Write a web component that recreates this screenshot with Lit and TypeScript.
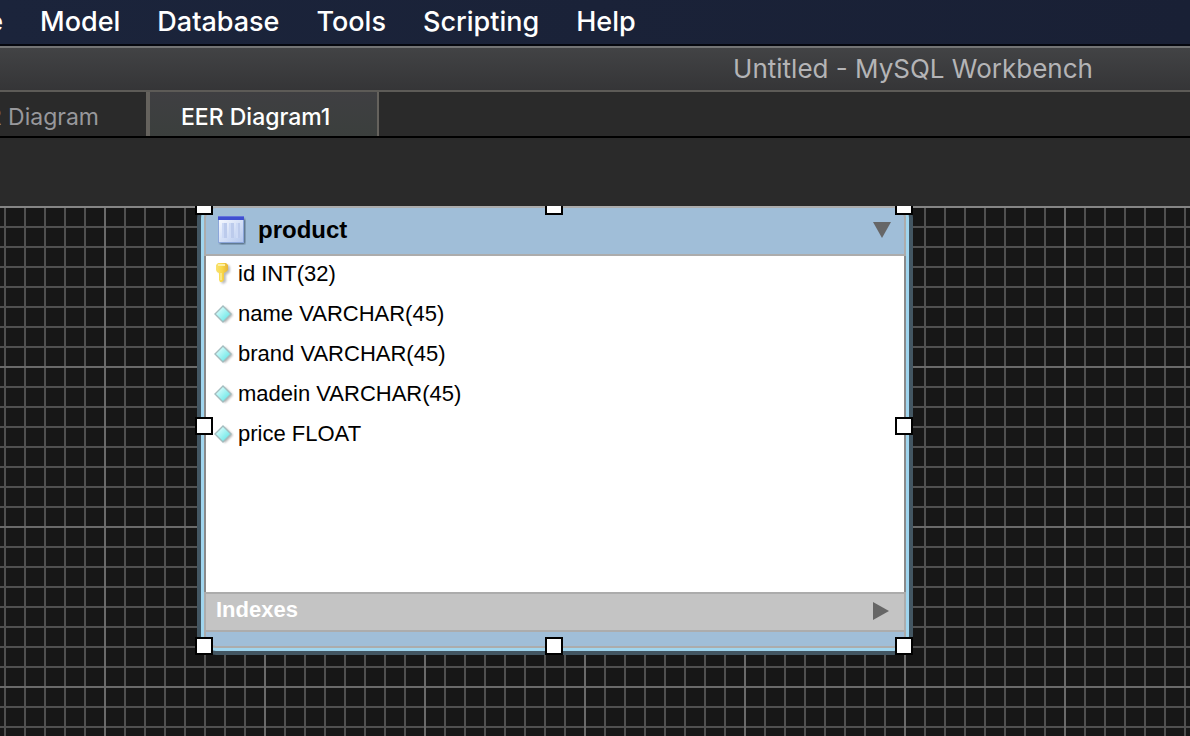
import { LitElement, html, css } from "lit";
import { customElement, property } from "lit/decorators.js";

interface Column {
  name: string;
  type: string;
  primary?: boolean;
}

const MENUS = ["Model", "Database", "Tools", "Scripting", "Help"];

const COLUMNS: Column[] = [
  { name: "id", type: "INT(32)", primary: true },
  { name: "name", type: "VARCHAR(45)" },
  { name: "brand", type: "VARCHAR(45)" },
  { name: "madein", type: "VARCHAR(45)" },
  { name: "price", type: "FLOAT" },
];

const HANDLES = ["nw", "n", "ne", "w", "e", "sw", "s", "se"];

const keyIcon = html`<svg width="20" height="24" viewBox="0 0 20 24" aria-hidden="true">
  <defs>
    <linearGradient id="gold" x1="0" x2="1" y1="0" y2="0">
      <stop offset="0" stop-color="#f8e270" />
      <stop offset="0.5" stop-color="#f9d848" />
      <stop offset="1" stop-color="#e6b43a" />
    </linearGradient>
    <filter id="soft" x="-30%" y="-30%" width="160%" height="160%">
      <feGaussianBlur stdDeviation="0.9" />
    </filter>
  </defs>
  <path d="M6 3h8l2 2v5l-4 3v7l-3 2-2-2v-8l-3-3V5z" fill="#777" opacity="0.5" filter="url(#soft)" />
  <path d="M4 1h8l2 2v5l-2 2-2 1v7l-2 2H6l-1-2v-7l-2-1-1-2V3z" fill="url(#gold)" />
  <path d="M4 2h7v2H4z" fill="#fdf0a4" />
  <path d="M6 11h2v7H6z" fill="#fbe883" />
</svg>`;

const columnIcon = html`<svg width="20" height="24" viewBox="0 0 20 24" aria-hidden="true">
  <defs>
    <linearGradient id="gem" x1="0" x2="1" y1="0" y2="1">
      <stop offset="0.2" stop-color="#d4fcfb" />
      <stop offset="0.75" stop-color="#78eaea" />
    </linearGradient>
    <filter id="soft" x="-30%" y="-30%" width="160%" height="160%">
      <feGaussianBlur stdDeviation="0.9" />
    </filter>
  </defs>
  <path d="M11 5l8 8-8 8-8-8z" fill="#777" opacity="0.55" filter="url(#soft)" />
  <path d="M9 4l8 8-8 8-8-8z" fill="url(#gem)" stroke="#a3bcbe" stroke-width="1.4" />
</svg>`;

const tableIcon = html`<svg width="30" height="30" viewBox="0 0 30 30" aria-hidden="true">
  <defs>
    <linearGradient id="sheet" x1="0" x2="1" y1="0" y2="1">
      <stop offset="0" stop-color="#f6f9ff" />
      <stop offset="1" stop-color="#b4c8ee" />
    </linearGradient>
    <filter id="soft" x="-20%" y="-20%" width="140%" height="140%">
      <feGaussianBlur stdDeviation="0.9" />
    </filter>
  </defs>
  <path d="M4 4h25v25H4z" fill="#2c4052" opacity="0.8" filter="url(#soft)" />
  <path d="M2 1h26v27H2z" fill="#8ba6da" />
  <path d="M3 5h24v22H3z" fill="url(#sheet)" />
  <path d="M2 1h26v4H2z" fill="#3f4fd0" />
  <path d="M2 1h26v1H2z" fill="#6473dc" />
  <path d="M6 8h5v15H6zM13 8h5v15h-5zM20 8h4v15h-4z" fill="#bccbec" />
  <path d="M6 8h2v15H6zM13 8h2v15h-2zM20 8h2v15h-2z" fill="#cddaf5" />
</svg>`;

@customElement("menu-bar")
class MenuBar extends LitElement {
  static styles = css`
    :host {
      display: block;
      background: linear-gradient(90deg, #1b243b, #192035);
      border-bottom: 2px solid #05070e;
    }
    .menus {
      display: flex;
      align-items: center;
      height: 44px;
      gap: 37px;
    }
    .clipped {
      display: flex;
      justify-content: flex-end;
      width: 3px;
      overflow: hidden;
      flex: none;
    }
    .menu {
      flex: none;
      margin: 0;
      padding: 0;
      border: 0;
      background: none;
      color: #fff;
      font: 500 27px/32px Inter, sans-serif;
    }
  `;
  render() {
    return html`<nav class="menus" aria-label="Application menu">
      <span class="clipped"><button class="menu">Arrange</button></span>
      ${MENUS.map((m) => html`<button class="menu">${m}</button>`)}
    </nav>`;
  }
}

@customElement("tab-strip")
class TabStrip extends LitElement {
  static styles = css`
    :host {
      display: block;
      background: #2a2a2a;
      border-bottom: 2px solid #000;
    }
    .tabs {
      display: flex;
      height: 44px;
    }
    .tab {
      display: flex;
      align-items: center;
      flex: none;
      box-sizing: border-box;
      margin: 0;
      border: 0;
      border-right: 2px solid #65625d;
      background: none;
      color: #98989c;
      font: 400 23px/28px Inter, sans-serif;
      padding: 6px 47px 0 31px;
      white-space: nowrap;
    }
    .first {
      justify-content: flex-end;
      width: 148px;
      overflow: hidden;
    }
    .active {
      border-left: 2px solid #65625d;
      background: linear-gradient(#3f3f42, #3b3f3d);
      color: #fff;
      font-weight: 500;
    }
  `;
  render() {
    return html`<div class="tabs" role="tablist">
      <button class="tab first" role="tab" aria-selected="false">EER Diagram</button>
      <button class="tab active" role="tab" aria-selected="true">EER Diagram1</button>
    </div>`;
  }
}

@customElement("table-figure")
class TableFigure extends LitElement {
  @property() name = "";
  @property({ attribute: false }) columns: Column[] = [];

  static styles = css`
    :host {
      display: block;
      font-family: "Liberation Sans", Arial, sans-serif;
      color: #000;
    }
    .figure {
      position: relative;
      box-sizing: border-box;
      border: 2px solid #acacac;
      border-radius: 12px;
      background: #a0bed8;
      box-shadow: 0 0 0 3px #a0d5ee, 0 0 0 7px #435662;
    }
    .header {
      display: flex;
      align-items: center;
      gap: 12px;
      box-sizing: border-box;
      height: 48px;
      padding: 0 13px 2px 10px;
      border-bottom: 2px solid #acacac;
    }
    .title {
      flex: 1;
      margin: 0;
      font-size: 24px;
      line-height: 28px;
      font-weight: 700;
    }
    .toggle {
      display: flex;
      margin: 0;
      padding: 0;
      border: 0;
      background: none;
    }
    .columns {
      display: flex;
      flex-direction: column;
      gap: 4px;
      box-sizing: border-box;
      min-height: 336px;
      margin: 0 -2px;
      padding: 0 8px;
      border: solid #8a8a8a;
      border-width: 0 2px;
      list-style: none;
      background: #fff;
    }
    .column {
      display: flex;
      align-items: center;
      gap: 4px;
      font-size: 22px;
      line-height: 36px;
    }
    .indexes {
      display: flex;
      align-items: center;
      justify-content: space-between;
      box-sizing: border-box;
      height: 40px;
      padding: 0 13px 2px 10px;
      border: solid #acacac;
      border-width: 2px 0;
      background: #c4c4c4;
    }
    .caption {
      margin: 0;
      color: #fff;
      font-size: 22px;
      line-height: 32px;
      padding-bottom: 2px;
    }
    .footer {
      height: 14px;
    }
    .handle {
      position: absolute;
      box-sizing: border-box;
      width: 18px;
      height: 18px;
      border: 2px solid #000;
      background: #fff;
      transform: translate(-50%, -50%);
    }
    .nw, .n, .ne { top: -2px; }
    .w, .e { top: calc(50% - 1px); }
    .sw, .s, .se { top: 100%; }
    .nw, .w, .sw { left: -2px; }
    .n, .s { left: calc(50% - 1px); }
    .ne, .e, .se { left: 100%; }
  `;
  render() {
    return html`<article class="figure">
      <header class="header">
        ${tableIcon}
        <h2 class="title">${this.name}</h2>
        <button class="toggle" aria-label="Collapse table">
          <svg width="18" height="16" viewBox="0 0 18 16"><path d="M0 0h18L9 16z" fill="#666" /></svg>
        </button>
      </header>
      <ul class="columns">
        ${this.columns.map(
          (c) => html`<li class="column">
            ${c.primary ? keyIcon : columnIcon}<span>${c.name} ${c.type}</span>
          </li>`
        )}
      </ul>
      <section class="indexes">
        <h3 class="caption">Indexes</h3>
        <button class="toggle" aria-label="Expand indexes">
          <svg width="18" height="18" viewBox="0 0 18 18"><path d="M0 0l16 9-16 9z" fill="#666" /></svg>
        </button>
      </section>
      <div class="footer"></div>
      ${HANDLES.map((h) => html`<i class="handle ${h}"></i>`)}
    </article>`;
  }
}

@customElement("app-root")
class AppRoot extends LitElement {
  static styles = css`
    :host {
      display: flex;
      flex-direction: column;
      min-height: 100vh;
      background: #2a2a2a;
    }
    .titlebar {
      height: 42px;
      padding-left: 636px;
      border-top: 2px solid #737475;
      border-bottom: 2px solid #5d5b57;
      background: linear-gradient(#424345, #353537);
      text-align: center;
      white-space: nowrap;
    }
    .caption {
      margin: 0;
      color: #b4b4b6;
      font: 400 26px/42px Inter, sans-serif;
    }
    .toolbar {
      height: 68px;
    }
    .canvas {
      position: relative;
      flex: 1;
      overflow: hidden;
      background-color: #171717;
      background-image:
        linear-gradient(#858585 2px, transparent 2px),
        linear-gradient(#6a6a6a 2px, transparent 2px),
        linear-gradient(90deg, #6a6a6a 2px, transparent 2px),
        linear-gradient(#505050 2px, transparent 2px),
        linear-gradient(90deg, #505050 2px, transparent 2px);
      background-size: 100% 100%, 160px 160px, 160px 160px, 20px 20px, 20px 20px;
      background-position: 0 0, 0 0, 104px 0, 0 0, 4px 0;
    }
    .product {
      position: absolute;
      left: 204px;
      top: 0;
      width: 702px;
    }
  `;
  render() {
    return html`
      <menu-bar></menu-bar>
      <header class="titlebar"><h1 class="caption">Untitled - MySQL Workbench</h1></header>
      <tab-strip></tab-strip>
      <div class="toolbar"></div>
      <main class="canvas">
        <table-figure class="product" name="product" .columns=${COLUMNS}></table-figure>
      </main>
    `;
  }
}
